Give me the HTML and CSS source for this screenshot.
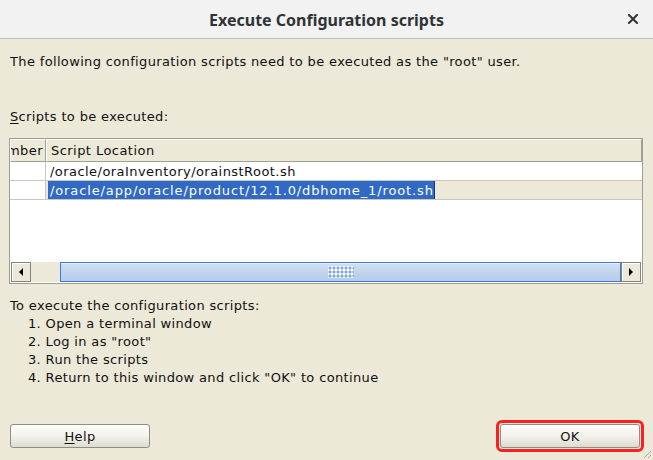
FILE: index.html
```html
<!DOCTYPE html>
<html>
<head>
<meta charset="utf-8">
<link rel="stylesheet" href="styles.css">
</head>
<body>
<div class="window">
  <div class="titlebar">
    <span></span>
    <span class="title">Execute Configuration scripts</span>
    <span class="close"><svg width="10" height="10" viewBox="0 0 10 10"><path d="M1 1L9 9M9 1L1 9" stroke="#2e3436" stroke-width="2" stroke-linecap="square"/></svg></span>
  </div>
  <div class="content">
    <p class="intro">The following configuration scripts need to be executed as the "root" user.</p>
    <p class="label"><u>S</u>cripts to be executed:</p>
    <div class="pane">
      <div class="grid">
        <div class="row header">
          <div class="c1"><span>Number</span></div>
          <div class="c2">Script Location</div>
        </div>
        <div class="row">
          <div class="c1"></div>
          <div class="c2">/oracle/oraInventory/orainstRoot.sh</div>
        </div>
        <div class="row alt">
          <div class="c1"></div>
          <div class="c2"><span class="sel">/oracle/app/oracle/product/12.1.0/dbhome_1/root.sh</span></div>
        </div>
        <div class="filler"></div>
      </div>
      <div class="hscroll">
        <div class="sbtn"><span class="arrow-left"></span></div>
        <div class="track">
          <div class="thumb"><span class="grip"></span></div>
        </div>
        <div class="sbtn"><span class="arrow-right"></span></div>
      </div>
    </div>
    <div class="instructions">
      <div>To execute the configuration scripts:</div>
      <div class="step">1. Open a terminal window</div>
      <div class="step">2. Log in as "root"</div>
      <div class="step">3. Run the scripts</div>
      <div class="step">4. Return to this window and click "OK" to continue</div>
    </div>
    <div class="buttons">
      <button class="btn"><u>H</u>elp</button>
      <span class="highlight"><button class="btn">OK</button></span>
    </div>
  </div>
  <svg class="grip-corner" width="10" height="10" viewBox="0 0 10 10"><path d="M9 2L2 9M9 6L6 9" stroke="#a9a79c" stroke-width="1"/></svg>
</div>
</body>
</html>
```

FILE: styles.css
```css
html, body {
  margin: 0;
  padding: 0;
  width: 653px;
  height: 460px;
  overflow: hidden;
}

.window {
  position: relative;
  width: 653px;
  height: 460px;
  background: #ece9d8;
  display: flex;
  flex-direction: column;
  font-family: "DejaVu Sans", sans-serif;
  font-size: 13px;
  letter-spacing: 0.35px;
  color: #111;
}

.titlebar {
  height: 38px;
  flex: 0 0 38px;
  background: #f2f2f2;
  border-bottom: 1px solid #bdbdb8;
  display: grid;
  grid-template-columns: 1fr auto 1fr;
  align-items: center;
  letter-spacing: 0;
}

.title {
  font-family: "Noto Sans", Roboto, sans-serif;
  font-weight: 700;
  font-size: 16px;
  color: #2e3436;
  padding-top: 1px;
}

.close {
  justify-self: end;
  padding-right: 15px;
  display: flex;
  align-items: center;
}

.content {
  flex: 1;
  display: flex;
  flex-direction: column;
  padding: 0 10px 8px 10px;
}

.intro {
  margin: 15px 0 0 0;
  line-height: 16px;
}

.label {
  margin: 39px 0 0 0;
  line-height: 16px;
}

.label u, .btn u {
  text-decoration: underline;
  text-underline-offset: 2px;
}

.pane {
  margin: 13px 0 0 -1px;
  width: 634px;
  height: 146px;
  box-sizing: border-box;
  border: 1px solid #9d9d98;
  background: #fff;
  display: flex;
  flex-direction: column;
}

.grid {
  flex: 1;
  display: flex;
  flex-direction: column;
  letter-spacing: 0.45px;
}

.row {
  display: flex;
  height: 19px;
  box-sizing: border-box;
  border-bottom: 1px solid #c9c7bd;
  line-height: 19px;
}

.row .c1 {
  width: 36px;
  box-sizing: border-box;
  border-right: 1px solid #c9c7bd;
}

.row .c2 {
  flex: 1;
  padding-left: 4px;
}

.row.alt .c2 {
  background: #ece9d8;
  padding-left: 2px;
}

.sel {
  display: inline-block;
  background: #316ac5;
  color: #fff;
  padding: 0 1px 0 2px;
  height: 18px;
  line-height: 19px;
  letter-spacing: 0.88px;
  box-shadow: inset -1px 0 0 #1b3b70;
}

.row.header {
  height: 23px;
  border-bottom: none;
  line-height: 22px;
}

.row.header .c1,
.row.header .c2 {
  background: #ece9d8;
  border-top: 1px solid #fff;
  border-left: 1px solid #fff;
  border-bottom: 1px solid #a3a092;
  border-right: 1px solid #a3a092;
  box-sizing: border-box;
  height: 23px;
}

.row.header .c1 {
  width: 36px;
  overflow: hidden;
  display: flex;
  justify-content: flex-end;
  padding-right: 2px;
  white-space: nowrap;
}

.row.header .c1 span {
  flex: 0 0 auto;
}

.row.header .c2 {
  padding-left: 4px;
}

.filler {
  flex: 1;
}

.hscroll {
  height: 20px;
  margin: 0 1px 1px 1px;
  display: flex;
}

.sbtn {
  width: 20px;
  box-sizing: border-box;
  background: #ece9d8;
  border: 1px solid #85847c;
  box-shadow: inset 1px 1px 0 #fff;
  display: flex;
  align-items: center;
  justify-content: center;
}

.arrow-left {
  width: 0;
  height: 0;
  border-top: 4px solid transparent;
  border-bottom: 4px solid transparent;
  border-right: 4px solid #000;
}

.arrow-right {
  width: 0;
  height: 0;
  border-top: 4px solid transparent;
  border-bottom: 4px solid transparent;
  border-left: 4px solid #000;
}

.track {
  flex: 1;
  background: #ece9d8;
  display: flex;
  padding-left: 29px;
}

.thumb {
  flex: 1;
  box-sizing: border-box;
  border: 1px solid #3e79d5;
  background: linear-gradient(#d3e0f2, #c2d4ed 50%, #b7cbe8);
  box-shadow: inset 0 1px 0 #eaf0f9;
  display: flex;
  align-items: center;
  justify-content: center;
}

.grip {
  width: 26px;
  height: 12px;
  background:
    radial-gradient(circle, #8aa9db 0.9px, transparent 1.3px) 0 0 / 4px 4px,
    radial-gradient(circle, #ffffff 0.7px, transparent 1.1px) 2px 2px / 4px 4px;
}

.instructions {
  margin-top: 13px;
  line-height: 18px;
}

.step {
  padding-left: 18px;
}

.buttons {
  margin-top: auto;
  display: flex;
  justify-content: space-between;
  align-items: center;
  margin-right: -1px;
}

.btn {
  width: 140px;
  height: 24px;
  box-sizing: border-box;
  border: 1px solid #8e8d86;
  border-radius: 3px;
  background: linear-gradient(#fdfdfb, #f4f3ee 45%, #dfdcd0);
  box-shadow: inset 0 1px 0 #fff;
  font-family: "DejaVu Sans", sans-serif;
  font-size: 13px;
  letter-spacing: 0.35px;
  color: #111;
  padding: 0;
}

.highlight {
  display: inline-flex;
  border: 3px solid #fb1f1f;
  border-radius: 6px;
  padding: 1px;
}

.grip-corner {
  position: absolute;
  right: 1px;
  bottom: 1px;
}
```
